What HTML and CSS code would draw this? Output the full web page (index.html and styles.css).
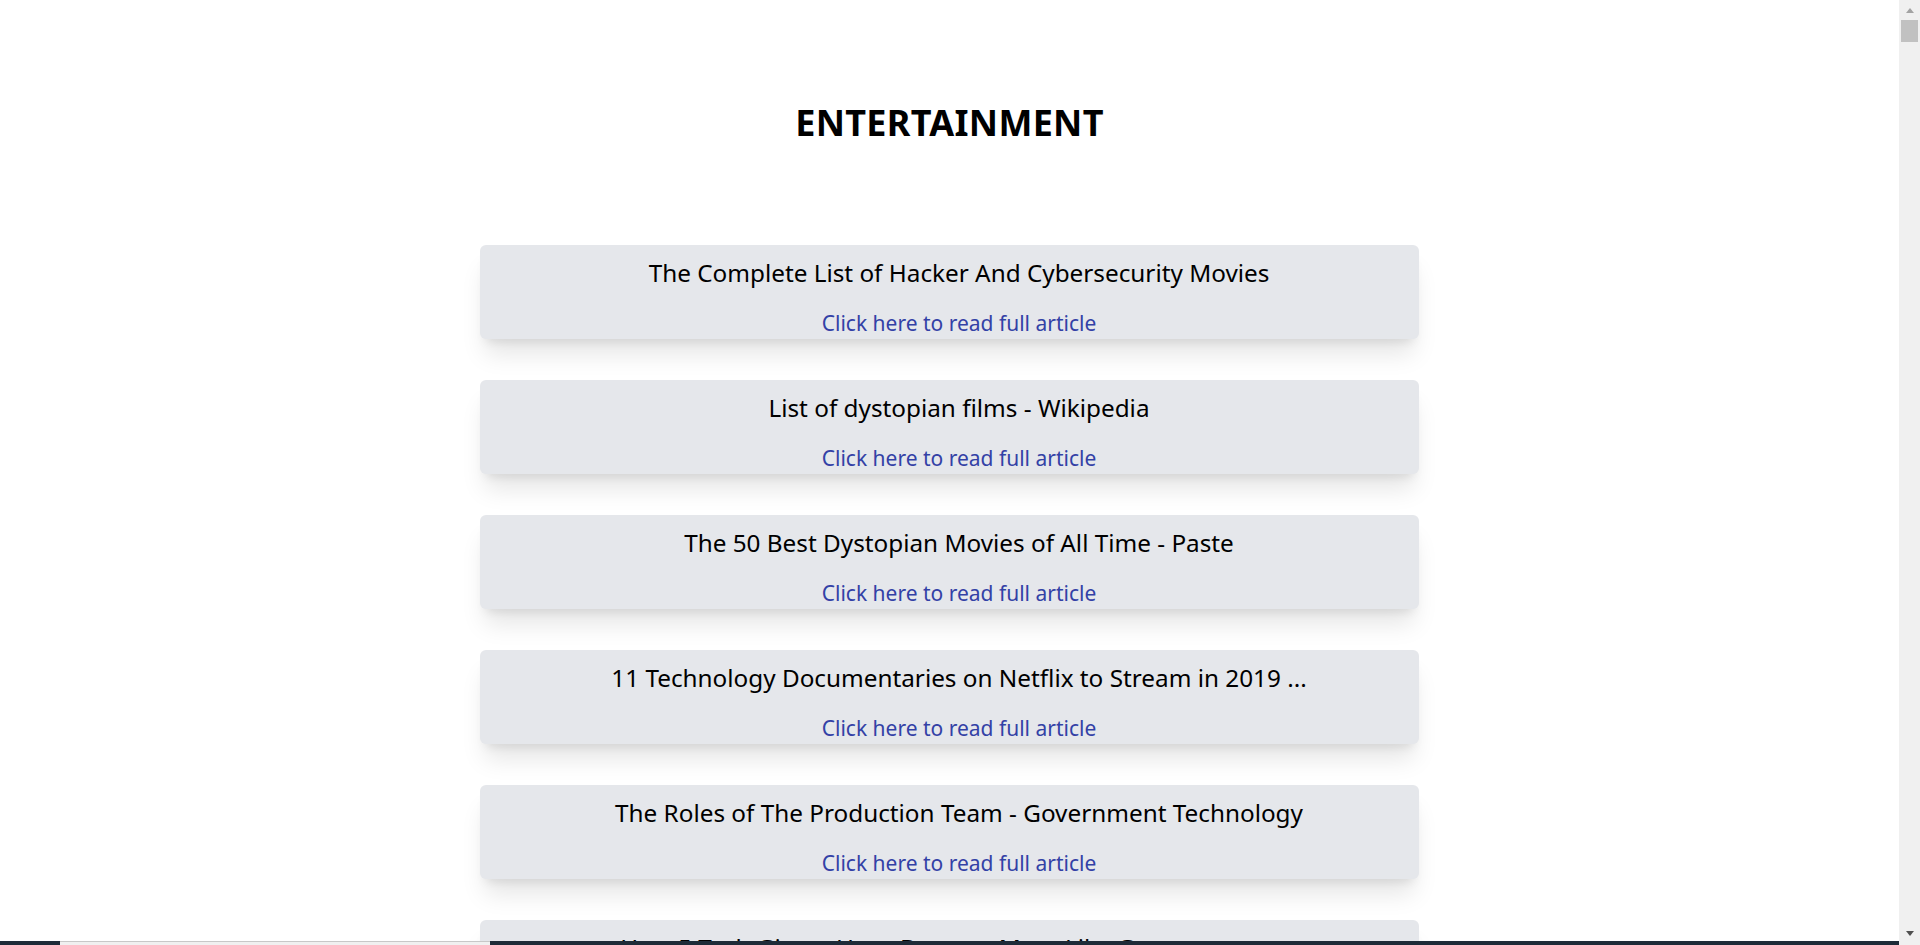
FILE: index.html
```html
<!DOCTYPE html>
<html lang="en">
<head>
<meta charset="utf-8">
<title>Entertainment</title>
<link rel="stylesheet" href="styles.css">
</head>
<body>
<main class="page">
  <h1 class="page-title">ENTERTAINMENT</h1>
  <ul class="articles">
    <li class="card"><h2 class="card-title">The Complete List of Hacker And Cybersecurity Movies</h2><a class="card-link" href="#">Click here to read full article</a></li>
    <li class="card"><h2 class="card-title">List of dystopian films - Wikipedia</h2><a class="card-link" href="#">Click here to read full article</a></li>
    <li class="card"><h2 class="card-title">The 50 Best Dystopian Movies of All Time - Paste</h2><a class="card-link" href="#">Click here to read full article</a></li>
    <li class="card"><h2 class="card-title">11 Technology Documentaries on Netflix to Stream in 2019 ...</h2><a class="card-link" href="#">Click here to read full article</a></li>
    <li class="card"><h2 class="card-title">The Roles of The Production Team - Government Technology</h2><a class="card-link" href="#">Click here to read full article</a></li>
    <li class="card"><h2 class="card-title">How 5 Tech Giants Have Become More Like Governments ...</h2><a class="card-link" href="#">Click here to read full article</a></li>
    <li class="card"><h2 class="card-title">The Best Tech Movies of All Time</h2><a class="card-link" href="#">Click here to read full article</a></li>
    <li class="card"><h2 class="card-title">Movies About Artificial Intelligence</h2><a class="card-link" href="#">Click here to read full article</a></li>
    <li class="card"><h2 class="card-title">Top Science Fiction Series to Watch</h2><a class="card-link" href="#">Click here to read full article</a></li>
    <li class="card"><h2 class="card-title">Streaming Services Compared</h2><a class="card-link" href="#">Click here to read full article</a></li>
  </ul>
</main>
<div class="bottom-strip"><span class="strip-dark strip-left"></span><span class="strip-light"></span><span class="strip-dark strip-right"></span></div>
<div class="scrollbar">
  <span class="scroll-arrow scroll-up"></span>
  <span class="scroll-thumb"></span>
  <span class="scroll-fill"></span>
  <span class="scroll-arrow scroll-down"></span>
</div>
</body>
</html>
```

FILE: styles.css
```css
html, body {
  margin: 0;
  padding: 0;
  background: #ffffff;
}
body {
  font-family: "Noto Sans", "Open Sans", "Liberation Sans", sans-serif;
  color: #000;
  padding-right: 21px;
}
.page {
  display: flex;
  flex-direction: column;
  align-items: center;
  padding-top: 103px;
  padding-bottom: 2000px;
}
.page-title {
  margin: 0 0 102px;
  font-size: 36px;
  line-height: 40px;
  font-weight: 700;
  letter-spacing: 0.3px;
}
.articles {
  list-style: none;
  margin: 0;
  padding: 0;
  width: 939px;
  display: flex;
  flex-direction: column;
  gap: 41px;
}
.card {
  background: #e5e7eb;
  border-radius: 6px;
  box-shadow: 0 20px 25px -5px rgba(0,0,0,0.1), 0 8px 10px -6px rgba(0,0,0,0.1);
  height: 94px;
  box-sizing: border-box;
  padding: 12px 0 0 19px;
  display: flex;
  flex-direction: column;
  align-items: center;
}
.card-title {
  margin: 0;
  font-size: 24.3px;
  line-height: 32px;
  font-weight: 400;
}
.card-link {
  margin-top: 20px;
  font-size: 21px;
  line-height: 29px;
  color: #3341a6;
  text-decoration: none;
}
.bottom-strip {
  position: fixed;
  left: 0;
  right: 0;
  bottom: 0;
  height: 4px;
  display: flex;
}
.strip-dark {
  background: #1e2b38;
}
.strip-left { width: 60px; }
.strip-light {
  width: 430px;
  background: #f0f0f0;
  border-top: 1px solid #c8c8c8;
  box-sizing: border-box;
}
.strip-right { flex: 1; }
.scrollbar {
  position: fixed;
  top: 0;
  right: 0;
  bottom: 0;
  width: 21px;
  background: #f0f0f0;
  display: flex;
  flex-direction: column;
  align-items: center;
  z-index: 2;
}
.scroll-arrow {
  width: 0;
  height: 0;
  border-left: 4px solid transparent;
  border-right: 4px solid transparent;
}
.scroll-up {
  margin-top: 8px;
  border-bottom: 5px solid #a3a3a3;
}
.scroll-down {
  margin-bottom: 9px;
  border-top: 5px solid #505050;
}
.scroll-thumb {
  margin-top: 7px;
  width: 17px;
  height: 22px;
  background: #c1c1c1;
}
.scroll-fill { flex: 1; }
```
